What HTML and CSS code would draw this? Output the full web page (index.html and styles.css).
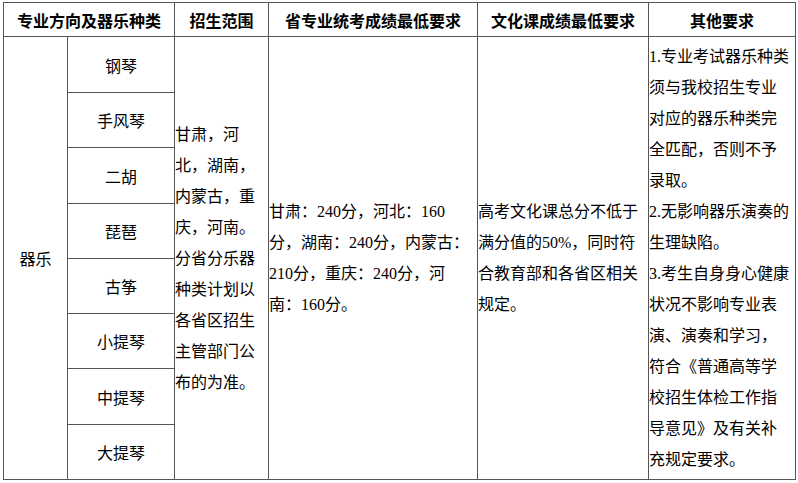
FILE: index.html
```html
<!DOCTYPE html>
<html lang="zh-CN">
<head>
<meta charset="utf-8">
<title>器乐招生要求</title>
<link rel="stylesheet" href="styles.css">
</head>
<body>
<table class="req">
  <colgroup>
    <col class="c1"><col class="c2"><col class="c3"><col class="c4"><col class="c5"><col class="c6">
  </colgroup>
  <thead>
    <tr class="head">
      <th colspan="2">专业方向及器乐种类</th>
      <th>招生范围</th>
      <th>省专业统考成绩最低要求</th>
      <th>文化课成绩最低要求</th>
      <th>其他要求</th>
    </tr>
  </thead>
  <tbody>
    <tr class="r56">
      <td rowspan="8" class="center">器乐</td>
      <td class="center">钢琴</td>
      <td rowspan="8" class="text">甘肃，河<br>北，湖南，<br>内蒙古，重<br>庆，河南。<br>分省分乐器<br>种类计划以<br>各省区招生<br>主管部门公<br>布的为准。</td>
      <td rowspan="8" class="text">甘肃：240分，河北：160<br>分，湖南：240分，内蒙古：<br>210分，重庆：240分，河<br>南：160分。</td>
      <td rowspan="8" class="text">高考文化课总分不低于<br>满分值的50%，同时符<br>合教育部和各省区相关<br>规定。</td>
      <td rowspan="8" class="text">1.专业考试器乐种类<br>须与我校招生专业<br>对应的器乐种类完<br>全匹配，否则不予<br>录取。<br>2.无影响器乐演奏的<br>生理缺陷。<br>3.考生自身身心健康<br>状况不影响专业表<br>演、演奏和学习，<br>符合《普通高等学<br>校招生体检工作指<br>导意见》及有关补<br>充规定要求。</td>
    </tr>
    <tr class="r55"><td class="center">手风琴</td></tr>
    <tr class="r56"><td class="center">二胡</td></tr>
    <tr class="r55"><td class="center">琵琶</td></tr>
    <tr class="r55"><td class="center">古筝</td></tr>
    <tr class="r55"><td class="center">小提琴</td></tr>
    <tr class="r56"><td class="center">中提琴</td></tr>
    <tr class="r55"><td class="center">大提琴</td></tr>
  </tbody>
</table>
</body>
</html>
```

FILE: styles.css
```css
html, body {
  margin: 0;
  padding: 0;
  background: #ffffff;
}

body {
  padding: 2px 0 0 3px;
  font-family: "Liberation Serif", "Noto Sans CJK SC", serif;
  font-size: 16px;
  color: #000;
}

.req {
  border-collapse: collapse;
  table-layout: fixed;
  width: 792px;
}

.req th,
.req td {
  border: 1px solid #555;
  padding: 0;
}

.c1 { width: 64px; }
.c2 { width: 107px; }
.c3 { width: 94px; }
.c4 { width: 209px; }
.c5 { width: 171px; }
.c6 { width: 147px; }

.head {
  height: 34px;
}

.head th {
  font-family: "Noto Sans CJK SC", sans-serif;
  font-weight: 700;
  font-size: 16px;
  text-align: center;
  vertical-align: middle;
  line-height: 20px;
}

.r56 { height: 56px; }
.r55 { height: 55px; }

.center {
  text-align: center;
  vertical-align: middle;
  font-family: "Noto Sans CJK SC", sans-serif;
  line-height: 20px;
}

.text {
  text-align: left;
  vertical-align: middle;
  line-height: 31px;
  white-space: nowrap;
  padding-left: 1px;
}
```
